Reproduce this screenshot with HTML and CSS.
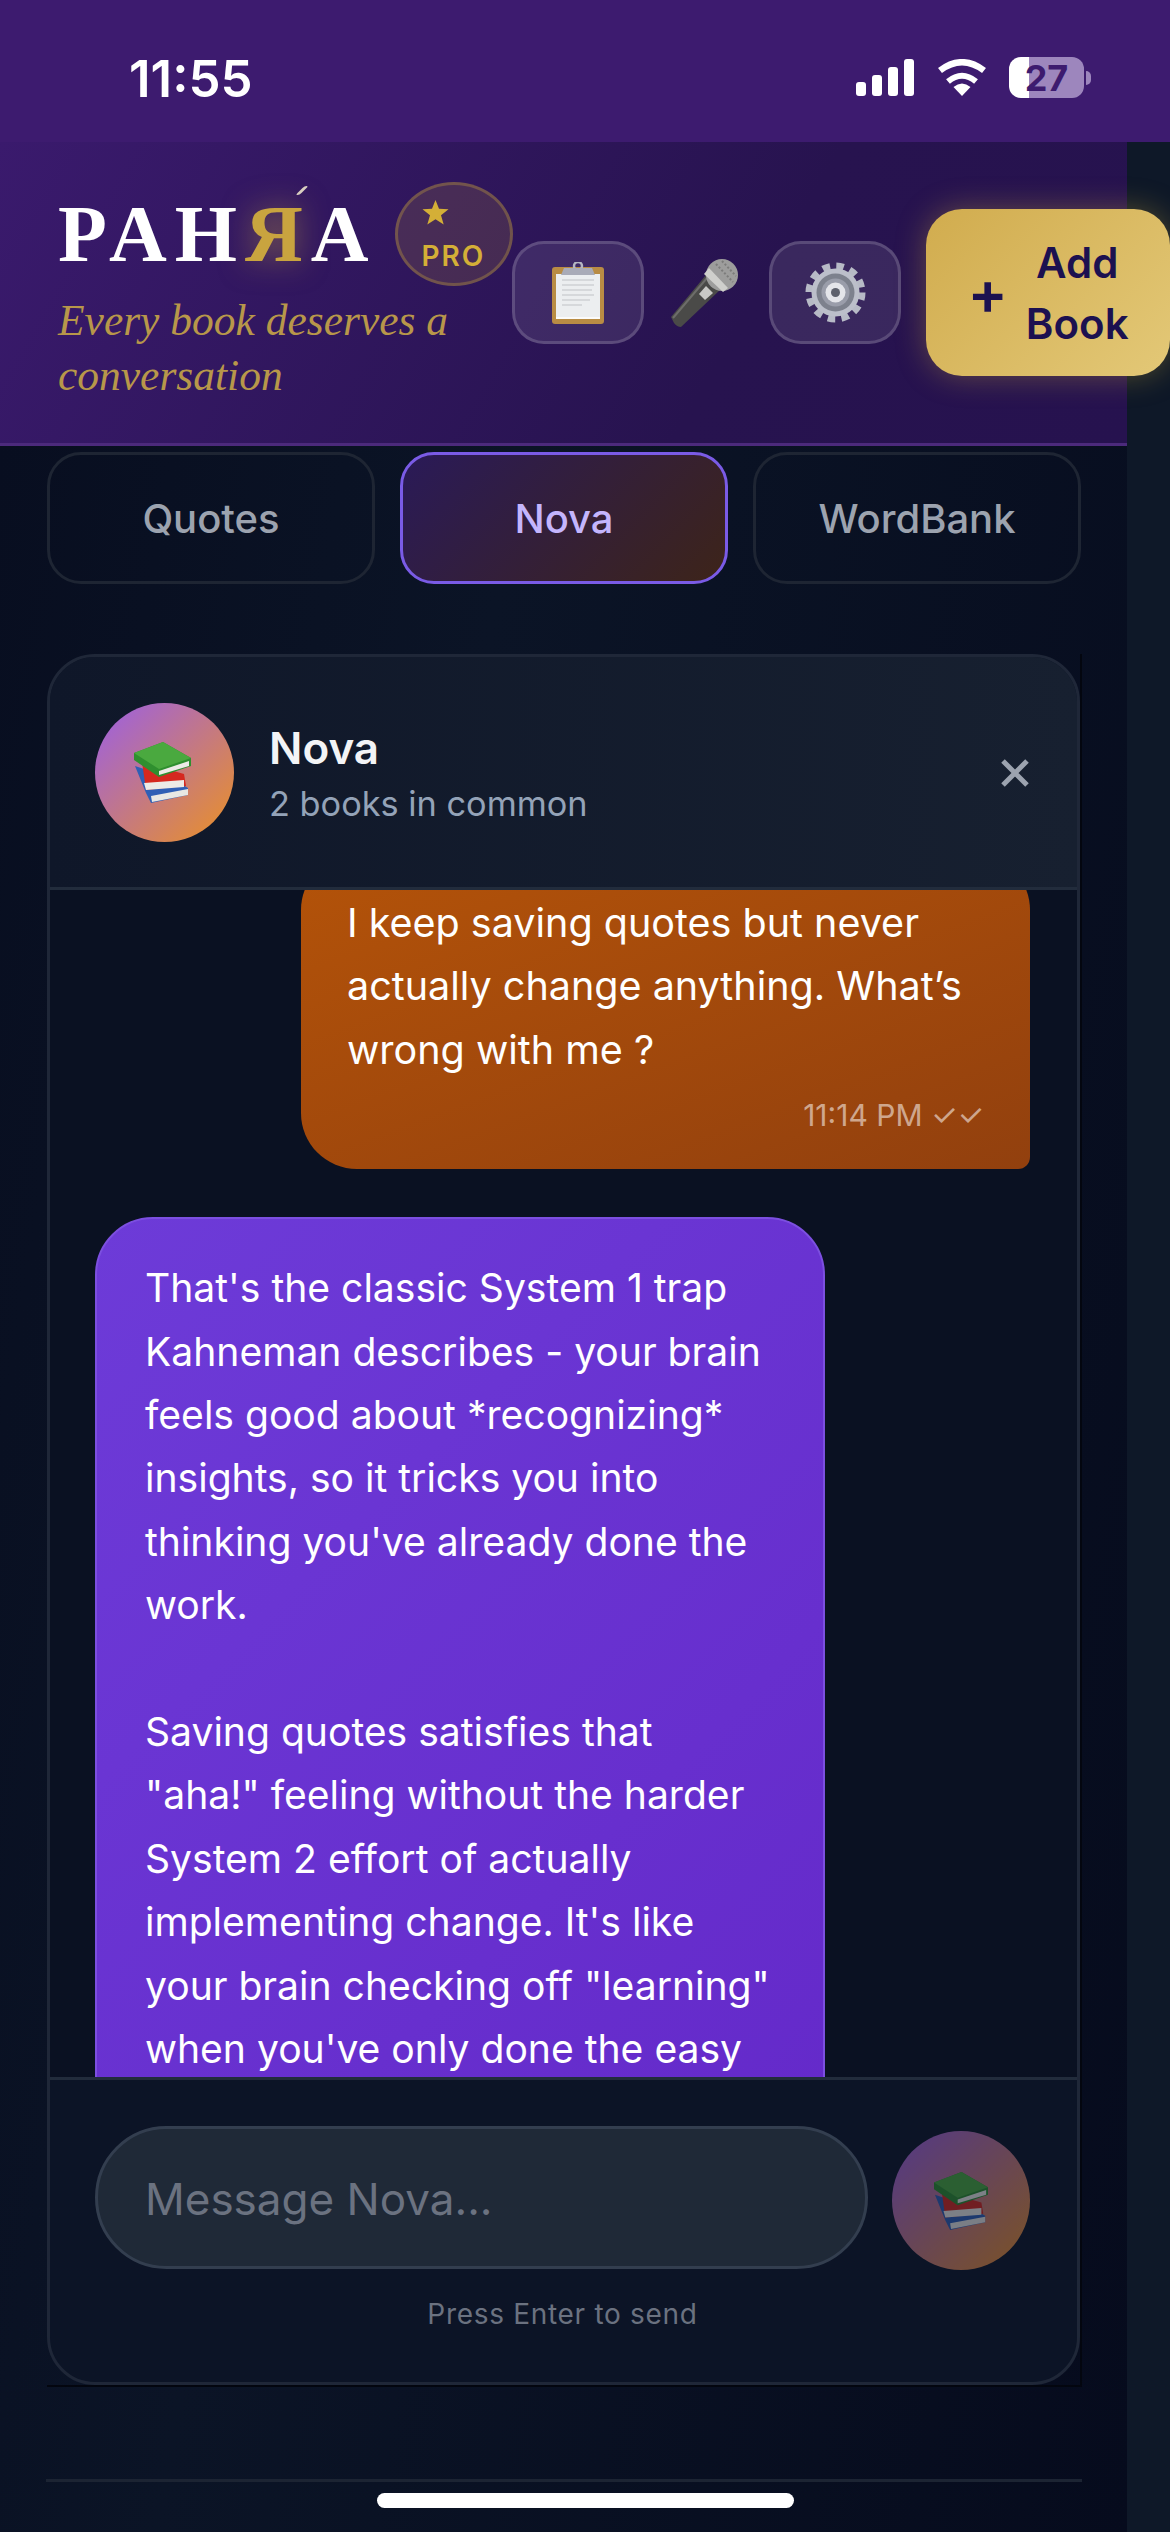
FILE: index.html
```html
<!DOCTYPE html>
<html lang="en">
<head>
  <meta charset="UTF-8">
  <meta name="viewport" content="width=device-width, initial-scale=1.0">
  <title>Pahra - Nova</title>
  <link rel="stylesheet" href="styles.css">
</head>
<body>
  <svg class="defs" width="0" height="0" aria-hidden="true">
    <symbol id="books" viewBox="0 0 57 61">
      <path d="M1 24 L37 36 L54 46 L54 53 L17 61 L12 51 Z" fill="#2f5fb5"/>
      <path d="M17 54 L54 47 L54 53 L18 60 Z" fill="#e8e8e4"/>
      <path d="M8 20 L50 32 L52 44 L12 48 Z" fill="#d5281f"/>
      <path d="M10 41 L50 38 L50 45 L12 48 Z" fill="#ecebe6"/>
      <path d="M0 11 L29 0 L57 16 L57 24 L25 35 L0 18 Z" fill="#2f8f2f"/>
      <path d="M0 11 L29 0 L57 16 L25 27 Z" fill="#4aa93f"/>
      <path d="M25 29 L55 19 L55 24 L25 33 Z" fill="#ecebe6"/>
    </symbol>
  </svg>

  <div class="status-bar">
    <span class="time">11:55</span>
    <div class="status-icons">
      <svg class="signal" width="58" height="37" viewBox="0 0 58 37" fill="#fff">
        <rect x="0" y="23" width="10" height="14" rx="3"/>
        <rect x="16" y="16" width="10" height="21" rx="3"/>
        <rect x="32" y="8" width="10" height="29" rx="3"/>
        <rect x="48" y="0" width="10" height="37" rx="3"/>
      </svg>
      <svg class="wifi" width="50" height="37" viewBox="0 0 50 37" fill="none" stroke="#fff">
        <path d="M3 11.5 Q25 -5 47 11.5" stroke-width="6.5"/>
        <path d="M11 22.5 Q25 11 39 22.5" stroke-width="6"/>
        <path d="M16.5 28 Q25 21 33.5 28 L25 37 Z" fill="#fff" stroke="none"/>
      </svg>
      <div class="battery"><span class="battery-num">27</span></div>
      <span class="battery-nub"></span>
    </div>
  </div>

  <header class="header">
    <div class="brand">
      <div class="logo-row">
        <h1 class="logo">PAH<span class="logo-ya">Я<span class="logo-accent"></span></span>A</h1>
        <div class="pro-badge">
          <svg class="pro-star" width="27" height="25" viewBox="0 0 27 25" fill="#d4af37">
            <polygon points="13.5,0 17,8.8 26.5,9.3 19,15.2 21.7,24.5 13.5,19.3 5.3,24.5 8,15.2 0.5,9.3 10,8.8"/>
          </svg>
          <span class="pro-label">PRO</span>
        </div>
      </div>
      <p class="tagline">Every book deserves a conversation</p>
    </div>

    <button class="icon-btn">
      <svg width="52" height="62" viewBox="0 0 52 62">
        <rect x="0" y="5" width="52" height="57" rx="3" fill="#b98c44"/>
        <rect x="4" y="12" width="44" height="43" fill="#eceef0"/>
        <path d="M10 18 H42 M10 23 H42 M10 28 H40 M10 33 H42 M10 38 H38 M10 43 H30" stroke="#d6d8db" stroke-width="2"/>
        <path d="M4 55 H48 V57 H4 Z" fill="#fbfbfb"/>
        <circle cx="26" cy="4" r="4" fill="none" stroke="#b4b6c2" stroke-width="2.5"/>
        <path d="M9 13 L12 6 H40 L43 13 Z" fill="#a9abb8"/>
      </svg>
    </button>
    <button class="mic-btn">
      <svg width="68" height="69" viewBox="0 0 68 69">
        <path d="M0 59 L35 17 L50 31 L10 69 Q6 69 3 65 Z" fill="#4a4a48"/>
        <path d="M28 36 L35 28 L42 35 L34 42 Z" fill="#c9c9c6"/>
        <path d="M2 60 L36 20" stroke="#6d6d6a" stroke-width="2"/>
        <circle cx="51" cy="17" r="16" fill="#9d9d9c"/>
        <path d="M38 10 L57 30 L52 34 L33 16 Z" fill="#cfcfcc"/>
        <path d="M45 6 L62 24 M51 3 L65 18" stroke="#7c7c7b" stroke-width="2" stroke-dasharray="2 2"/>
      </svg>
    </button>
    <button class="icon-btn">
      <svg width="61" height="61" viewBox="0 0 61 61">
        <circle cx="30.5" cy="30.5" r="26.5" fill="none" stroke="#b7bac6" stroke-width="7" stroke-dasharray="7.5 6.38"/>
        <circle cx="30.5" cy="30.5" r="24" fill="#bcbfca"/>
        <circle cx="30.5" cy="30.5" r="19" fill="#7d818d"/>
        <circle cx="30.5" cy="30.5" r="14" fill="#9a9daa"/>
        <circle cx="30.5" cy="30.5" r="10" fill="#e4e5ea"/>
        <circle cx="30.5" cy="30.5" r="4.5" fill="#5e616d"/>
      </svg>
    </button>
    <button class="add-btn">
      <span class="add-plus">+</span>
      <span class="add-text">Add<br>Book</span>
    </button>
  </header>

  <main class="main">
    <nav class="tabs">
      <button class="tab">Quotes</button>
      <button class="tab tab-active">Nova</button>
      <button class="tab">WordBank</button>
    </nav>

    <div class="chat-frame">
      <section class="chat">
        <div class="chat-head">
          <div class="avatar">
            <svg width="57" height="61"><use href="#books"/></svg>
          </div>
          <div class="chat-who">
            <div class="chat-name">Nova</div>
            <div class="chat-sub">2 books in common</div>
          </div>
          <svg class="chat-close" width="28" height="28" viewBox="0 0 28 28" stroke="#9ca3af" stroke-width="5">
            <path d="M2 2 L26 26 M26 2 L2 26"/>
          </svg>
        </div>

        <div class="messages">
          <div class="msg msg-me">
            I keep saving quotes but never actually change anything. What’s wrong with me ?
            <div class="msg-time">11:14 PM ✓✓</div>
          </div>
          <div class="msg msg-nova">
            That's the classic System 1 trap Kahneman describes - your brain feels good about *recognizing* insights, so it tricks you into thinking you've already done the work.<br><br>Saving quotes satisfies that "aha!" feeling without the harder System 2 effort of actually implementing change. It's like your brain checking off "learning" when you've only done the easy part.
          </div>
        </div>

        <div class="composer">
          <div class="composer-row">
            <div class="composer-input">Message Nova...</div>
            <button class="send-btn">
              <svg width="54" height="58"><use href="#books"/></svg>
            </button>
          </div>
          <div class="composer-hint">Press Enter to send</div>
        </div>
      </section>
    </div>

    <div class="foot-line"></div>
    <div class="home-bar"></div>
  </main>
</body>
</html>
```

FILE: styles.css
```css
* {
  box-sizing: border-box;
  margin: 0;
  padding: 0;
}

html, body {
  width: 1170px;
  height: 2532px;
  overflow: hidden;
}

body {
  background: #0e1828;
  font-family: 'Inter', sans-serif;
  color: white;
}

button {
  font-family: inherit;
  border: none;
  background: none;
  color: inherit;
}

.defs {
  display: block;
  height: 0;
}

/* status bar */
.status-bar {
  height: 142px;
  background: #3d1b6f;
  display: flex;
  justify-content: space-between;
  align-items: flex-start;
  padding: 50px 79px 0 129px;
}

.time {
  font-family: 'Inter', sans-serif;
  font-size: 51px;
  line-height: 58px;
  font-weight: 600;
}

.status-icons {
  display: flex;
  align-items: center;
  margin-top: 7px;
}

.wifi {
  margin-left: 23px;
}

.battery {
  width: 75px;
  height: 41px;
  margin-left: 22px;
  border-radius: 12px;
  background: linear-gradient(90deg, #fff 27%, #9d86bd 27%);
  color: #3d1b6f;
  display: flex;
  justify-content: center;
  align-items: center;
}

.battery-num {
  font-size: 36px;
  font-weight: 700;
}

.battery-nub {
  width: 5px;
  height: 14px;
  margin-left: 2px;
  border-radius: 0 6px 6px 0;
  background: #9d86bd;
}

/* header */
.header {
  width: 1127px;
  height: 304px;
  padding-left: 58px;
  background: linear-gradient(120deg, #3a1a6d 0%, #27134f 65%, #26124f 100%);
  border-bottom: 3px solid #4c2a7c;
  display: flex;
  align-items: center;
}

.brand {
  width: 454px;
  flex-shrink: 0;
}

.logo-row {
  display: flex;
  align-items: center;
  gap: 18px;
}

.logo {
  font-family: 'Liberation Serif', serif;
  font-size: 80px;
  font-weight: 700;
  letter-spacing: 8px;
  line-height: 90px;
  color: white;
}

.logo-ya {
  position: relative;
  color: #c9a43f;
  text-shadow: 0 0 30px rgba(212, 175, 55, 0.5);
}

.logo-accent {
  position: absolute;
  left: 55px;
  top: -4px;
  width: 4px;
  height: 9px;
  border-radius: 2px;
  background: #d9cfc0;
  transform: skewX(-45deg);
}

.pro-badge {
  width: 118px;
  height: 104px;
  flex-shrink: 0;
  padding: 15px 0 0 24px;
  border-radius: 50%;
  border: 3px solid rgba(212, 175, 55, 0.3);
  background: rgba(212, 175, 55, 0.15);
  display: flex;
  flex-direction: column;
  align-items: flex-start;
}

.pro-star {
  display: block;
}

.pro-label {
  font-size: 28px;
  line-height: 34px;
  margin-top: 14px;
  font-weight: 600;
  letter-spacing: 2px;
  color: #d4af37;
}

.tagline {
  font-family: 'Liberation Serif', serif;
  font-style: italic;
  font-size: 43.5px;
  line-height: 55px;
  margin-top: 7px;
  color: #b8974a;
}

.icon-btn {
  width: 132px;
  height: 103px;
  flex-shrink: 0;
  border-radius: 32px;
  border: 3px solid rgba(255, 255, 255, 0.16);
  background: rgba(255, 255, 255, 0.09);
  display: flex;
  justify-content: center;
  align-items: center;
}

.mic-btn {
  width: 68px;
  height: 69px;
  flex-shrink: 0;
  margin: 0 30px 0 27px;
}

.add-btn {
  width: 244px;
  height: 167px;
  flex-shrink: 0;
  margin-left: 25px;
  border-radius: 36px;
  background: linear-gradient(135deg, #d1ac4e, #e3c877);
  box-shadow: 0 0 30px rgba(212, 175, 55, 0.35);
  color: #1c1150;
  display: flex;
  justify-content: center;
  align-items: center;
  gap: 18px;
  font-size: 42px;
  font-weight: 600;
  line-height: 61px;
}

.add-plus {
  font-size: 60px;
  font-weight: 600;
}

.add-text {
  text-align: center;
}

/* main */
.main {
  width: 1127px;
  height: 2086px;
  padding: 6px 0 0 47px;
  background: linear-gradient(100deg, #080e20 0%, #0b1426 35%, #060b1d 100%);
}

.tabs {
  width: 1034px;
  display: flex;
  gap: 25px;
}

.tab {
  flex: 1;
  height: 132px;
  border-radius: 34px;
  border: 3px solid #1e2533;
  font-size: 40px;
  font-weight: 500;
  color: #9ca3af;
}

.tab-active {
  border-color: #7a5be6;
  color: #c4b5fd;
  background: linear-gradient(135deg, #2a1a58, #3d2419);
}

.chat-frame {
  width: 1035px;
  height: 1733px;
  margin-top: 70px;
  border-right: 2px solid #03060f;
  border-bottom: 2px solid #03060f;
}

.chat {
  width: 1033px;
  height: 1731px;
  border-radius: 48px;
  border: 3px solid #1f2738;
  background: #0c1426;
  overflow: hidden;
}

.chat-head {
  height: 233px;
  padding: 0 48px 0 45px;
  background: linear-gradient(90deg, #0f1729, #172030);
  border-bottom: 3px solid #222c3c;
  display: flex;
  align-items: center;
}

.avatar {
  width: 139px;
  height: 139px;
  flex-shrink: 0;
  padding-right: 4px;
  border-radius: 50%;
  background: linear-gradient(135deg, #9a5ee8, #ec9222);
  display: flex;
  justify-content: center;
  align-items: center;
}

.chat-who {
  flex: 1;
  margin-left: 35px;
  padding-top: 3px;
}

.chat-name {
  font-size: 44px;
  line-height: 56px;
  font-weight: 600;
  color: #f3f4f6;
}

.chat-sub {
  font-size: 34.3px;
  line-height: 46px;
  margin-top: 5px;
  color: #94a3b8;
}

.chat-close {
  margin-bottom: -2px;
}

.messages {
  height: 1190px;
  overflow: hidden;
  padding: 0 47px 0 45px;
  background: #0a1122;
  border-bottom: 3px solid #222c3c;
  display: flex;
  flex-direction: column;
  gap: 48px;
}

.msg {
  font-size: 39.5px;
  line-height: 63.4px;
}

.msg-me {
  width: 729px;
  margin-top: -36px;
  align-self: flex-end;
  padding: 38px 46px 34px;
  border-radius: 56px 56px 12px 56px;
  background: linear-gradient(160deg, #b45309, #92400e);
}

.msg-time {
  text-align: right;
  font-size: 30px;
  line-height: 40px;
  margin-top: 13px;
  color: rgba(255, 255, 255, 0.55);
}

.msg-nova {
  width: 730px;
  flex-shrink: 0;
  padding: 37px 48px;
  border-radius: 58px;
  border: 2px solid #7c4fe0;
  background: linear-gradient(135deg, #6d3bd8, #6429c9);
  font-size: 39.1px;
}

.composer {
  padding: 46px 47px 0 45px;
}

.composer-row {
  display: flex;
  align-items: flex-end;
  gap: 24px;
}

.composer-input {
  flex: 1;
  height: 143px;
  padding-left: 47px;
  border-radius: 72px;
  border: 3px solid #333e4f;
  background: #1f2937;
  font-size: 44px;
  line-height: 140px;
  color: #6b7280;
}

.send-btn {
  width: 138px;
  height: 139px;
  flex-shrink: 0;
  margin-bottom: -1px;
  border-radius: 50%;
  background: linear-gradient(135deg, #9a5ee8, #ec9222);
  opacity: 0.5;
  display: flex;
  justify-content: center;
  align-items: center;
}

.composer-hint {
  text-align: center;
  font-size: 28px;
  line-height: 40px;
  margin-top: 25px;
  letter-spacing: 0.7px;
  color: #6b7280;
}

.foot-line {
  width: 1036px;
  height: 3px;
  margin: 92px 0 0 -1px;
  background: #1c2433;
}

.home-bar {
  width: 417px;
  height: 15px;
  margin: 11px 0 0 330px;
  border-radius: 8px;
  background: white;
}
```
